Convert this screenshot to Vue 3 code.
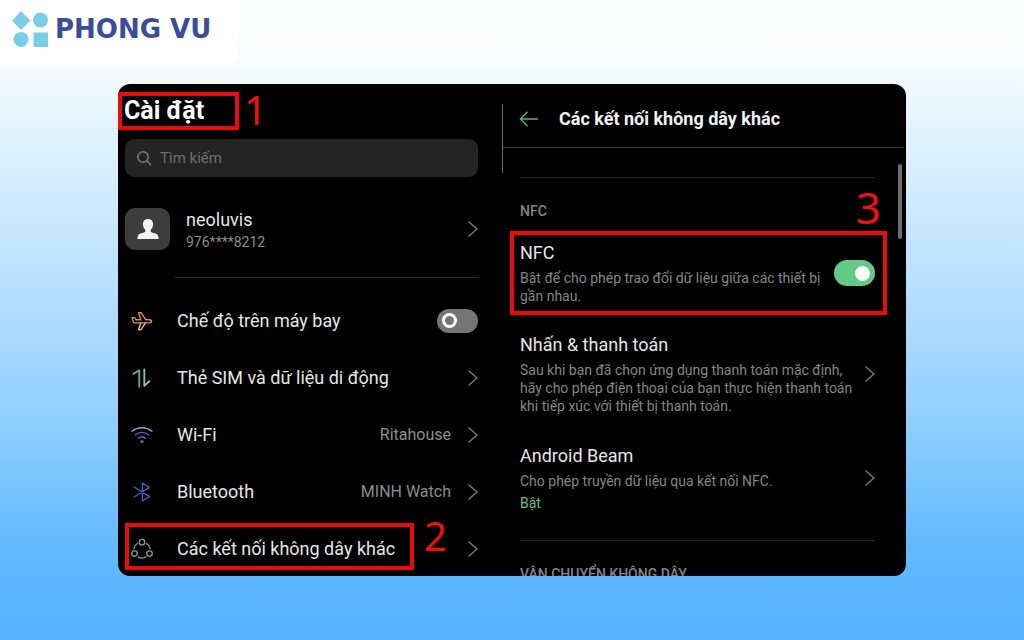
<script setup>
import { ref } from 'vue'

const query = ref('')
const airplane = ref(false)
const nfc = ref(true)

const links = [
  { id: 'sim', label: 'Thẻ SIM và dữ liệu di động', value: '' },
  { id: 'wifi', label: 'Wi-Fi', value: 'Ritahouse' },
  { id: 'bluetooth', label: 'Bluetooth', value: 'MINH Watch' },
  { id: 'other', label: 'Các kết nối không dây khác', value: '', step: '2' },
]
</script>

<template>
  <div class="page">
    <header class="brand">
      <svg class="brand-mark" viewBox="0 0 36 36" aria-hidden="true">
        <path d="M9 0 18.500 9.500 9 19 0 9.500Z" />
        <circle cx="28.500" cy="9" r="7.500" />
        <circle cx="9" cy="28.500" r="7.500" />
        <path d="M21.500 21.500H36V36H21.500Z" />
      </svg>
      <span class="brand-name">PHONG VU</span>
    </header>

    <main class="panel">
      <section class="settings">
        <div class="title-row">
          <h1>Cài đặt</h1>
          <span class="step step-1">1</span>
        </div>

        <label class="search">
          <svg viewBox="0 0 16 16" aria-hidden="true"><circle cx="7" cy="7" r="5.200" /><path d="M10.800 10.800 14.500 14.500" /></svg>
          <input v-model="query" type="text" placeholder="Tìm kiếm" aria-label="Tìm kiếm" />
        </label>

        <button class="account" type="button">
          <span class="avatar">
            <svg viewBox="0 0 22 20" aria-hidden="true">
              <path d="M11 0C7.800 0 5.800 2.200 5.900 5.300 6 7.800 7 9.700 8.300 10.800V12.800C7.500 13.800 3.500 14 1.800 15.400 .8 16.300 .4 18 .4 20H21.600C21.600 18 21.200 16.300 20.200 15.400 18.500 14 14.500 13.800 13.700 12.800V10.800C15 9.700 16 7.800 16.100 5.300 16.200 2.200 14.200 0 11 0Z" />
            </svg>
          </span>
          <span class="account-text">
            <span class="account-name">neoluvis</span>
            <span class="account-id">976****8212</span>
          </span>
          <svg class="chevron" viewBox="0 0 10 16" aria-hidden="true"><path d="M1 1 9 8 1 15" /></svg>
        </button>

        <ul class="list">
          <li class="row">
            <svg class="icon plane" viewBox="0 0 24 24" aria-hidden="true">
              <path d="M1.200 8.500H3.800L5.800 10.600H10.800L8.200 3H11L16 10.600H20C23.300 10.800 23.300 14 20 14H3.800C2.600 13.500 1.800 11 1.200 8.500Z" />
              <path class="pale" d="M15.500 14.200 11 21.500H8.200L10.500 14.200" />
            </svg>
            <label class="row-label" for="airplane">Chế độ trên máy bay</label>
            <input id="airplane" v-model="airplane" class="switch" type="checkbox" role="switch" />
          </li>
          <li v-for="link in links" :key="link.id">
            <button class="row" type="button">
              <svg v-if="link.id === 'sim'" class="icon sim" viewBox="0 0 24 24" aria-hidden="true">
                <path d="M2.500 7.500 9 3.500V21.500" /><path class="pale" d="M14.500 2.500V20.500L20 15.500" />
              </svg>
              <svg v-else-if="link.id === 'wifi'" class="icon wifi" viewBox="0 0 24 24" aria-hidden="true">
                <path class="pale" d="M1.200 8C7.500 2.800 16.500 2.800 22.800 8" /><path d="M4.800 11.800C9 8.300 15 8.300 19.200 11.800" /><path d="M8.300 15.500C10.500 13.700 13.500 13.700 15.700 15.500" /><circle cx="12" cy="19.200" r="1" />
              </svg>
              <svg v-else-if="link.id === 'bluetooth'" class="icon bluetooth" viewBox="0 0 24 24" aria-hidden="true">
                <path d="M3.500 6.500 20 17 12.500 21.800V2.200L20 7 3.500 17.500" />
              </svg>
              <svg v-else class="icon nodes" viewBox="0 0 24 24" aria-hidden="true">
                <circle cx="12" cy="4.500" r="3" /><circle cx="3.800" cy="17" r="3" /><circle cx="20.200" cy="17" r="3" />
                <path d="M7 6C4.800 7.300 3.500 9 3.200 11.500M17 6C19.200 7.300 20.500 9 20.800 11.500M8 20.800C10.500 22.200 13.500 22.200 16 20.800" />
              </svg>
              <span class="row-label">{{ link.label }}</span>
              <span class="row-value">{{ link.value }}</span>
              <svg class="chevron" viewBox="0 0 10 16" aria-hidden="true"><path d="M1 1 9 8 1 15" /></svg>
              <span v-if="link.step" class="frame"></span>
              <span v-if="link.step" class="step step-2">{{ link.step }}</span>
            </button>
          </li>
        </ul>
      </section>

      <section class="detail">
        <div class="detail-head">
          <button class="back" type="button" aria-label="Quay lại">
            <svg viewBox="0 0 20 16" aria-hidden="true"><path d="M19.500 8H1.500M8.500 1 1.500 8 8.500 15" /></svg>
          </button>
          <h2>Các kết nối không dây khác</h2>
        </div>

        <div class="detail-body">
          <h3 class="group">NFC</h3>
          <span class="step step-3">3</span>

          <div class="item item-nfc">
            <label class="item-text" for="nfc">
              <span class="item-title">NFC</span>
              <span class="item-desc">Bật để cho phép trao đổi dữ liệu giữa các thiết bị gần nhau.</span>
            </label>
            <input id="nfc" v-model="nfc" class="switch" type="checkbox" role="switch" />
          </div>

          <button class="item item-pay" type="button">
            <span class="item-text">
              <span class="item-title">Nhấn &amp; thanh toán</span>
              <span class="item-desc">Sau khi bạn đã chọn ứng dụng thanh toán mặc định, hãy cho phép điện thoại của bạn thực hiện thanh toán khi tiếp xúc với thiết bị thanh toán.</span>
            </span>
            <svg class="chevron" viewBox="0 0 10 16" aria-hidden="true"><path d="M1 1 9 8 1 15" /></svg>
          </button>

          <button class="item item-beam" type="button">
            <span class="item-text">
              <span class="item-title">Android Beam</span>
              <span class="item-desc">Cho phép truyền dữ liệu qua kết nối NFC.</span>
              <span class="item-state">Bật</span>
            </span>
            <svg class="chevron" viewBox="0 0 10 16" aria-hidden="true"><path d="M1 1 9 8 1 15" /></svg>
          </button>

          <h3 class="group group-next">VẬN CHUYỂN KHÔNG DÂY</h3>
        </div>
        <span class="scrollbar"></span>
      </section>
    </main>
  </div>
</template>

<style>
body {
  margin: 0;
}
</style>

<style scoped>
*,
*::before {
  box-sizing: border-box;
}
.page {
  display: flex;
  flex-direction: column;
  height: 100vh;
  min-height: 400px;
  font-family: Roboto, "Noto Sans", sans-serif;
  color: #e6e6e6;
  background: linear-gradient(180deg, #fff 0%, #fafdff 8%, #eaf7ff 16%, #b8dfff 45%, #94d0ff 64%, #62b9ff 86%, #54b1ff 100%);
}
button {
  margin: 0;
  padding: 0;
  border: 0;
  background: none;
  color: inherit;
  font: inherit;
  text-align: left;
}
h1, h2, h3 {
  margin: 0;
}
svg {
  display: block;
  flex: none;
  fill: none;
  stroke-linecap: round;
  stroke-linejoin: round;
}

.brand {
  display: flex;
  align-items: center;
  align-self: flex-start;
  gap: 7px;
  height: 64px;
  padding: 0 26px 6px 12px;
  border-bottom-right-radius: 8px;
  background: #fff;
}
.brand-mark {
  width: 36px;
  height: 36px;
  fill: #7acde6;
}
.brand-name {
  font: bold 26px/32px "DejaVu Sans", sans-serif;
  color: #3b4c98;
}

.panel {
  display: grid;
  grid-template-columns: 384fr 404fr;
  flex: 1;
  min-height: 0;
  margin: 20px 118px 64px;
  overflow: hidden;
  border-radius: 12px;
  background: #000;
}

.settings {
  min-height: 0;
  padding: 8px 24px 0 7px;
}
.title-row {
  position: relative;
  width: 121px;
  margin-left: -7px;
  border: 4px solid #e80c0c;
}
h1 {
  padding-left: 2px;
  font-size: 25px;
  line-height: 30px;
  font-weight: 700;
  color: #fff;
}
.step {
  position: absolute;
  font-family: "Noto Sans", sans-serif;
  font-size: 40px;
  line-height: 40px;
  color: #f01010;
}
.step-1 {
  left: 122px;
  top: -6px;
}
.search {
  display: flex;
  align-items: center;
  gap: 8px;
  height: 38px;
  margin-top: 9px;
  padding: 0 11px;
  border-radius: 9px;
  background: #242424;
}
.search svg {
  width: 16px;
  height: 16px;
  stroke: #7b7b7b;
  stroke-width: 1.500;
}
.search input {
  flex: 1;
  min-width: 0;
  padding: 0;
  border: 0;
  outline: 0;
  background: none;
  color: #e6e6e6;
  font: 15px/20px Roboto, sans-serif;
}
.search input::placeholder {
  color: #6e6e6e;
  opacity: 1;
}
.account {
  display: flex;
  align-items: center;
  width: 100%;
  height: 96px;
  margin-top: 4px;
}
.avatar {
  display: grid;
  place-items: center;
  width: 45px;
  height: 42px;
  border-radius: 10px;
  background: #3d3d3d;
}
.avatar svg {
  width: 22px;
  height: 20px;
  fill: #f2f2f2;
}
.account-text {
  display: flex;
  flex: 1;
  flex-direction: column;
  padding-top: 2px;
  margin-left: 16px;
}
.account-name {
  font-size: 18px;
  line-height: 24px;
}
.account-id {
  font-size: 14px;
  line-height: 20px;
  color: #8d8d8d;
}
.chevron {
  width: 10px;
  height: 16px;
  stroke: #777;
  stroke-width: 1.500;
}
.list {
  position: relative;
  margin: 0;
  padding: 15px 0 0;
  list-style: none;
}
.list::before {
  content: "";
  position: absolute;
  top: 0;
  right: 0;
  left: 50px;
  height: 1px;
  background: #2c2c2c;
}
.row {
  position: relative;
  display: flex;
  align-items: center;
  width: 100%;
  height: 57px;
}
.icon {
  width: 22px;
  height: 22px;
  margin: 0 24px 0 6px;
  stroke-width: 1.500;
}
.plane { stroke: #d98a68; }
.plane .pale { stroke: #e0bd96; }
.sim { stroke: #57b184; stroke-width: 2; }
.sim .pale { stroke: #8fc3a6; }
.wifi { stroke: #6468c0; }
.wifi .pale { stroke: #9a9cd0; }
.bluetooth { stroke: #4a5fc8; }
.nodes { stroke: #8d8d96; }
.row-label {
  flex: 1;
  font-size: 18px;
  line-height: 24px;
  white-space: nowrap;
}
.row-value {
  margin-right: 17px;
  font-size: 16px;
  line-height: 24px;
  color: #8d8d8d;
}
.switch {
  appearance: none;
  flex: none;
  display: flex;
  align-items: center;
  width: 41px;
  height: 24px;
  margin: 0;
  padding: 0 5px;
  border-radius: 12px;
  background: #757575;
}
.switch::before {
  content: "";
  width: 15px;
  height: 15px;
  border: 3px solid #fff;
  border-radius: 50%;
}
.switch:checked {
  justify-content: flex-end;
  height: 26px;
  border-radius: 13px;
  background: #62c987;
}
.switch:checked::before {
  background: #fff;
}
.frame {
  position: absolute;
  top: 3px;
  left: 0;
  width: 289px;
  height: 47px;
  border: 4px solid #e80c0c;
}
.step-2 {
  left: 299px;
  top: -4px;
}

.detail {
  position: relative;
  min-height: 0;
}
.detail::before {
  content: "";
  position: absolute;
  top: 20px;
  left: 0;
  width: 1px;
  height: 69px;
  background: #6b6b6b;
}
.detail-head {
  display: flex;
  align-items: center;
  gap: 21px;
  height: 64px;
  margin: 0 3px 0 1px;
  padding: 6px 0 0 16px;
  border-bottom: 1px solid #3b3b3b;
}
.back svg {
  width: 19px;
  height: 16px;
  stroke: #57b27c;
  stroke-width: 1.500;
}
h2 {
  font-size: 18px;
  line-height: 24px;
  font-weight: 700;
  color: #f2f2f2;
}
.detail-body {
  position: relative;
  margin: 29px 31px 0 18px;
  padding-top: 23px;
  border-top: 1px solid #242424;
}
.group {
  font-size: 14px;
  line-height: 20px;
  font-weight: 500;
  color: #858585;
}
.step-3 {
  right: -6px;
  top: 6px;
  font-size: 44px;
  line-height: 46px;
}
.item {
  display: flex;
  align-items: center;
  justify-content: space-between;
}
.item-text {
  display: flex;
  flex-direction: column;
}
.item-title {
  margin-bottom: 4px;
  font-size: 18px;
  line-height: 24px;
}
.item-desc, .item-state {
  font-size: 14px;
  line-height: 18px;
  color: #858585;
}
.item-nfc {
  height: 84px;
  margin: 10px -12px 0 -10px;
  padding: 0 8px 0 6px;
  border: 4px solid #e80c0c;
}
.item-nfc .item-text {
  width: 310px;
}
.item-pay {
  width: 100%;
  margin-top: 18px;
}
.item-pay .item-text {
  width: 334px;
}
.item-beam {
  width: 100%;
  margin-top: 29px;
}
.item-state {
  margin-top: 4px;
  color: #6ebd8b;
}
.group-next {
  margin-top: 28px;
  padding-top: 23px;
  border-top: 1px solid #2c2c2c;
  white-space: nowrap;
}
.scrollbar {
  position: absolute;
  top: 80px;
  right: 4px;
  width: 4px;
  height: 75px;
  border-radius: 2px;
  background: #6e6e6e;
}
</style>
